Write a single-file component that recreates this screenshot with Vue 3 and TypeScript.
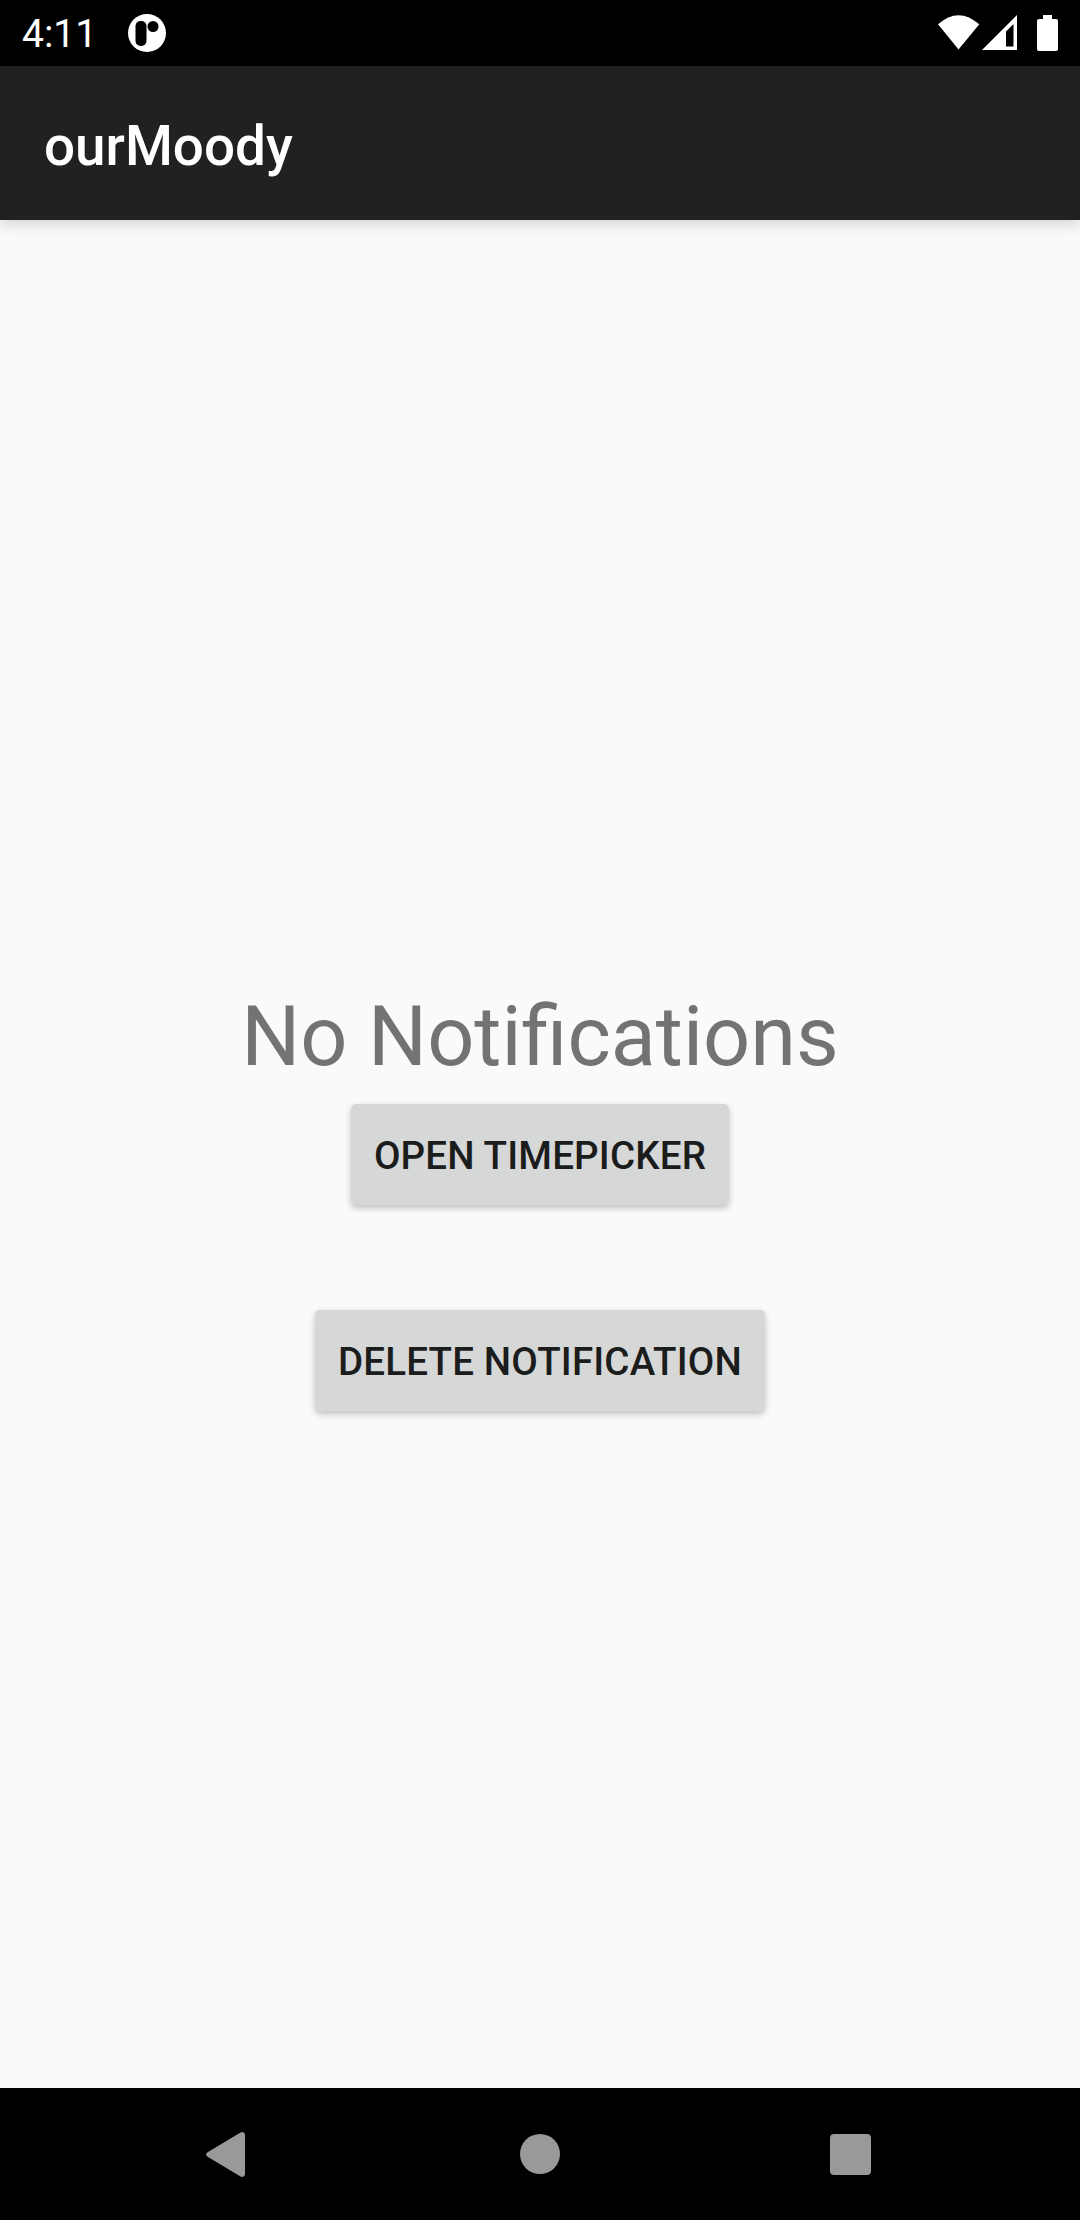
<script setup lang="ts">
const title: string = 'ourMoody'
const actions: string[] = ['Open Timepicker', 'Delete Notification']
</script>

<template>
  <div class="screen">
    <header class="status">
      <span class="clock">4:11</span>
      <svg class="app-icon" width="38" height="38" viewBox="0 0 38 38">
        <circle cx="19" cy="19" r="19" fill="#fff" />
        <rect x="7.500" y="7" width="11" height="25" rx="5" fill="#000" />
        <circle cx="25" cy="12.500" r="5.500" fill="#000" />
      </svg>
      <svg class="system" width="142" height="66" viewBox="938 0 142 66" fill="#fff">
        <path d="M938 24.300Q958.500 6 979.300 24.300L958.500 49.500Z" />
        <path fill-rule="evenodd" d="M1017 15V50H982ZM1013.500 24L1006 31.500V46.500H1013.500Z" />
        <path d="M1043 15H1052V19H1056Q1058 19 1058 21V49Q1058 51 1056 51H1039Q1037 51 1037 49V21Q1037 19 1039 19H1043Z" />
      </svg>
    </header>
    <div class="toolbar"><h1>{{ title }}</h1></div>
    <main>
      <p class="message">No Notifications</p>
      <button v-for="action in actions" :key="action" type="button">{{ action }}</button>
    </main>
    <nav>
      <svg width="1080" height="132" viewBox="0 2088 1080 132" fill="#999">
        <path d="M240.500 2132.500Q242.500 2131.500 244 2132.800Q245 2133.700 245 2135V2174Q245 2175.300 244 2176.200Q242.500 2177.500 240.500 2176.500L208 2157Q206 2155.700 206 2154.500Q206 2153.300 208 2152Z" />
        <circle cx="540" cy="2154" r="20" />
        <rect x="830" y="2134" width="41" height="41" rx="4" />
      </svg>
    </nav>
  </div>
</template>

<style>
body { margin: 0; }
</style>
<style scoped>
.screen { width: 1080px; height: 2220px; display: flex; flex-direction: column; background: #fafafa; font-family: Roboto, sans-serif; overflow: hidden; }
.status { height: 66px; background: #000; color: #fff; display: flex; align-items: center; flex: none; }
.clock { box-sizing: border-box; width: 127.500px; padding: 2px 0 0 22px; font-size: 39px; line-height: 46px; }
.app-icon { flex: none; }
.system { margin-left: auto; flex: none; }
.toolbar { height: 154px; flex: none; background: #212121; color: #fff; display: flex; align-items: center; padding: 6px 44px 0; box-sizing: border-box; box-shadow: 0 4px 14px rgba(0, 0, 0, .16); }
h1 { margin: 0; font-size: 54.800px; font-weight: 500; line-height: 64px; }
main { flex: 1; display: flex; flex-direction: column; align-items: center; }
.message { margin: 762px 0 0; height: 122px; font-size: 82.800px; line-height: 110px; color: #737373; }
button { display: block; box-sizing: border-box; border: 0; border-radius: 5px; height: 101px; padding: 2px 23px 0; margin-bottom: 105px; background: #d6d7d7; color: #1b1c1c; font: 500 38.500px/48px Roboto, sans-serif; letter-spacing: .18px; text-transform: uppercase; box-shadow: 0 3px 7px rgba(0, 0, 0, .24); }
nav { height: 132px; flex: none; background: #000; }
nav svg { display: block; }
</style>
